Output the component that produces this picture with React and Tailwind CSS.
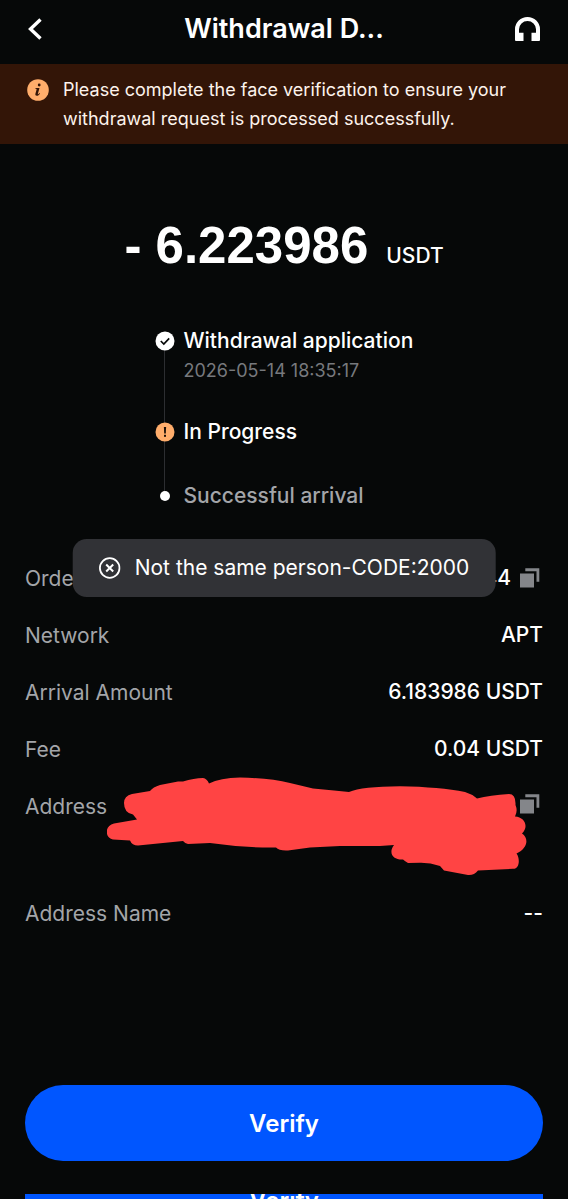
import React from "react";

function ChevronIcon() {
  return (
    <svg width="14" height="22" viewBox="0 0 14 22" fill="none" aria-hidden="true">
      <path d="M12.5 1.5 2.5 11l10 9.5" stroke="#fff" strokeWidth="3.4" />
    </svg>
  );
}

function HeadsetIcon() {
  return (
    <svg width="25" height="24" viewBox="0 0 25 24" aria-hidden="true">
      <path
        d="M1 24a1 1 0 0 1-1-1V12.3a12.5 12.3 0 0 1 25 0V23a1 1 0 0 1-1 1h-7.5v-8.3H21v-3.4a8.5 8.3 0 0 0-17 0v3.4h4.5V24Z"
        fill="#fff"
      />
    </svg>
  );
}

function InfoIcon() {
  return (
    <svg width="22" height="22" viewBox="0 0 22 22" aria-hidden="true">
      <circle cx="11" cy="11" r="10.8" fill="#ffad6b" />
      <circle cx="12.2" cy="6" r="1.4" fill="#331507" />
      <path
        d="M8.4 9h4.1l-1.7 5.900c-.1.5.3.6.7.2l1-1.100.5.4c-.9 1.600-2 2.400-3.200 2.400-1.200 0-1.700-.8-1.400-2l1.200-4.300c.1-.5-.2-.7-1.200-.8Z"
        fill="#331507"
      />
    </svg>
  );
}

function CheckIcon() {
  return (
    <svg width="20" height="20" viewBox="0 0 20 20" fill="none" aria-hidden="true">
      <circle cx="10" cy="10" r="9.5" fill="#fff" />
      <path d="m5.8 10 3 3 5.4-5.6" stroke="#060808" strokeWidth="1.7" />
    </svg>
  );
}

function AlertIcon() {
  return (
    <svg width="20" height="20" viewBox="0 0 20 20" aria-hidden="true">
      <circle cx="10" cy="10" r="9.5" fill="#ffad6b" />
      <path d="M8.9 5h2.200l-.3 6.500H9.200Z" fill="#1c1008" />
      <rect x="9" y="12.8" width="2" height="2" fill="#1c1008" />
    </svg>
  );
}

function DotIcon() {
  return (
    <svg width="20" height="20" viewBox="0 0 20 20" aria-hidden="true">
      <circle cx="10" cy="10" r="5" fill="#fff" />
    </svg>
  );
}

function CopyIcon() {
  return (
    <svg width="20" height="20" viewBox="0 0 20 20" aria-hidden="true">
      <path d="M0 5.500h14v14H0ZM5.300.3h14v13.500h-2.800V3.200H5.300Z" fill="#84868a" />
    </svg>
  );
}

function ErrorIcon() {
  return (
    <svg width="22" height="22" viewBox="0 0 22 22" fill="none" stroke="#fff" aria-hidden="true">
      <circle cx="11" cy="11" r="9.8" strokeWidth="1.8" />
      <path d="m7.500 7.500 7 7m0-7-7 7" strokeWidth="2" />
    </svg>
  );
}

function Scribble() {
  return (
    <svg
      className="absolute -top-[14px] right-4"
      width="420"
      height="99"
      viewBox="107 777 420 99"
      aria-hidden="true"
    >
      <path
        d="M124 803Q124 796 132 794L150 791Q153 787 160 785L178 781.500L183 781.500Q194 778 203 778Q207 778.500 209 783.500Q220 778 240 777.500Q270 778 290 783L313 788.500L334 790.500L349 792Q362 786.500 400 786.300Q440 787 465 792Q472 794 477 798.500Q490 795 509 794Q516 794 515.500 805Q518 811 515 816.500C525 817 529 827 522 833.500C529 838 528 848 516.500 853.500C520 858 520 869 513 868.800L478 870.500Q474 875.500 468 875L444 870.500L440 866Q430 862.500 420 862.700L408 863Q405 861 403 859.500C393 860 388 853 394 845L380 846L340 846L310 847.500L288 850.500Q279 851 276 847.500Q245 848 210 843L188 844Q185 843.500 183 841L138 845.500Q132 845.500 130 840.500L113 839.500C105 838 104 826 114 823.500L137 819.500L133 814.500Q124 813 124 803Z"
        fill="#ff4444"
      />
    </svg>
  );
}

function Step({ icon, title, time, className, muted }) {
  return (
    <li className={`relative flex gap-[9px] ${className}`}>
      <span className="relative flex h-[30px] shrink-0 items-center">{icon}</span>
      <div>
        <p
          className={`text-[21px] leading-[30px] font-medium ${muted ? "text-[#a3a5a9]" : "text-white"}`}
        >
          {title}
        </p>
        {time && <time className="block text-[18px] leading-[30px] text-[#77797d]">{time}</time>}
      </div>
    </li>
  );
}

function Row({ label, children, className = "h-[57px]" }) {
  return (
    <div className={`relative flex items-start justify-between ${className}`}>
      <dt className="pt-px text-[21px] leading-[30px] text-[#a3a5a9]">{label}</dt>
      <dd className="flex items-center text-[21px] leading-[30px] font-medium text-white">
        {children}
      </dd>
    </div>
  );
}

function CopyButton({ label }) {
  return (
    <button
      type="button"
      aria-label={label}
      className="ml-[9px] mr-[3px] flex h-[26px] items-center"
    >
      <CopyIcon />
    </button>
  );
}

export default function App() {
  return (
    <main className="flex min-h-screen flex-col bg-[#060808] font-['Inter','Liberation_Sans',sans-serif] text-white">
      <header className="grid h-16 grid-cols-[1fr_auto_1fr] items-center px-7 pb-[6px]">
        <button type="button" aria-label="Back" className="justify-self-start">
          <ChevronIcon />
        </button>
        <h1 className="text-[27px] leading-9 font-semibold">Withdrawal D...</h1>
        <button type="button" aria-label="Support" className="justify-self-end">
          <HeadsetIcon />
        </button>
      </header>

      <section className="flex gap-[14px] bg-[#331507] px-[27px] py-[11px]">
        <span className="flex h-[29px] shrink-0 items-center">
          <InfoIcon />
        </span>
        <p className="max-w-[460px] text-[18px] leading-[29px] text-[#fdf3ec]">
          Please complete the face verification to ensure your withdrawal request is processed
          successfully.
        </p>
      </section>

      <p className="mt-[72px] flex h-[60px] items-baseline justify-center whitespace-pre leading-[60px]">
        <span className="font-['Liberation_Sans',sans-serif] text-[51px] font-bold">
          - 6.223986
        </span>
        <span className="ml-[18px] text-[21px] font-medium">USDT</span>
      </p>

      <ol className="relative mx-auto mt-[50px] w-[259px] whitespace-nowrap">
        <span className="absolute top-4 bottom-4 left-[9px] w-px bg-[#2c2e31]" />
        <Step
          icon={<CheckIcon />}
          title="Withdrawal application"
          time="2026-05-14 18:35:17"
          className="h-[91px]"
        />
        <Step icon={<AlertIcon />} title="In Progress" className="h-16" />
        <Step icon={<DotIcon />} title="Successful arrival" className="h-[30px]" muted />
      </ol>

      <section className="relative mt-[52px] px-[25px]">
        <dl>
          <Row label="Order ID">
            44
            <CopyButton label="Copy order ID" />
          </Row>
          <Row label="Network">APT</Row>
          <Row label="Arrival Amount">6.183986 USDT</Row>
          <Row label="Fee">0.04 USDT</Row>
          <Row label="Address" className="h-[107px]">
            <CopyButton label="Copy address" />
            <Scribble />
          </Row>
          <Row label="Address Name">--</Row>
        </dl>
        <div
          role="status"
          className="absolute -top-6 left-1/2 flex h-[58px] -translate-x-1/2 items-center gap-[14px] rounded-[14px] bg-[#313236] px-[26px] whitespace-nowrap"
        >
          <ErrorIcon />
          <span className="text-[21px] leading-[30px]">Not the same person-CODE:2000</span>
        </div>
      </section>

      <footer className="mt-auto px-[25px]">
        <button
          type="button"
          className="mb-[33px] block h-[76px] w-full rounded-full bg-[#0056ff] pt-[2px] text-[24px] font-semibold"
        >
          Verify
        </button>
        <div className="h-[5px] overflow-hidden">
          <button
            type="button"
            className="-mt-8 block h-[76px] w-full bg-[#0056ff] pt-[2px] text-[24px] font-semibold"
          >
            Verify
          </button>
        </div>
      </footer>
    </main>
  );
}
